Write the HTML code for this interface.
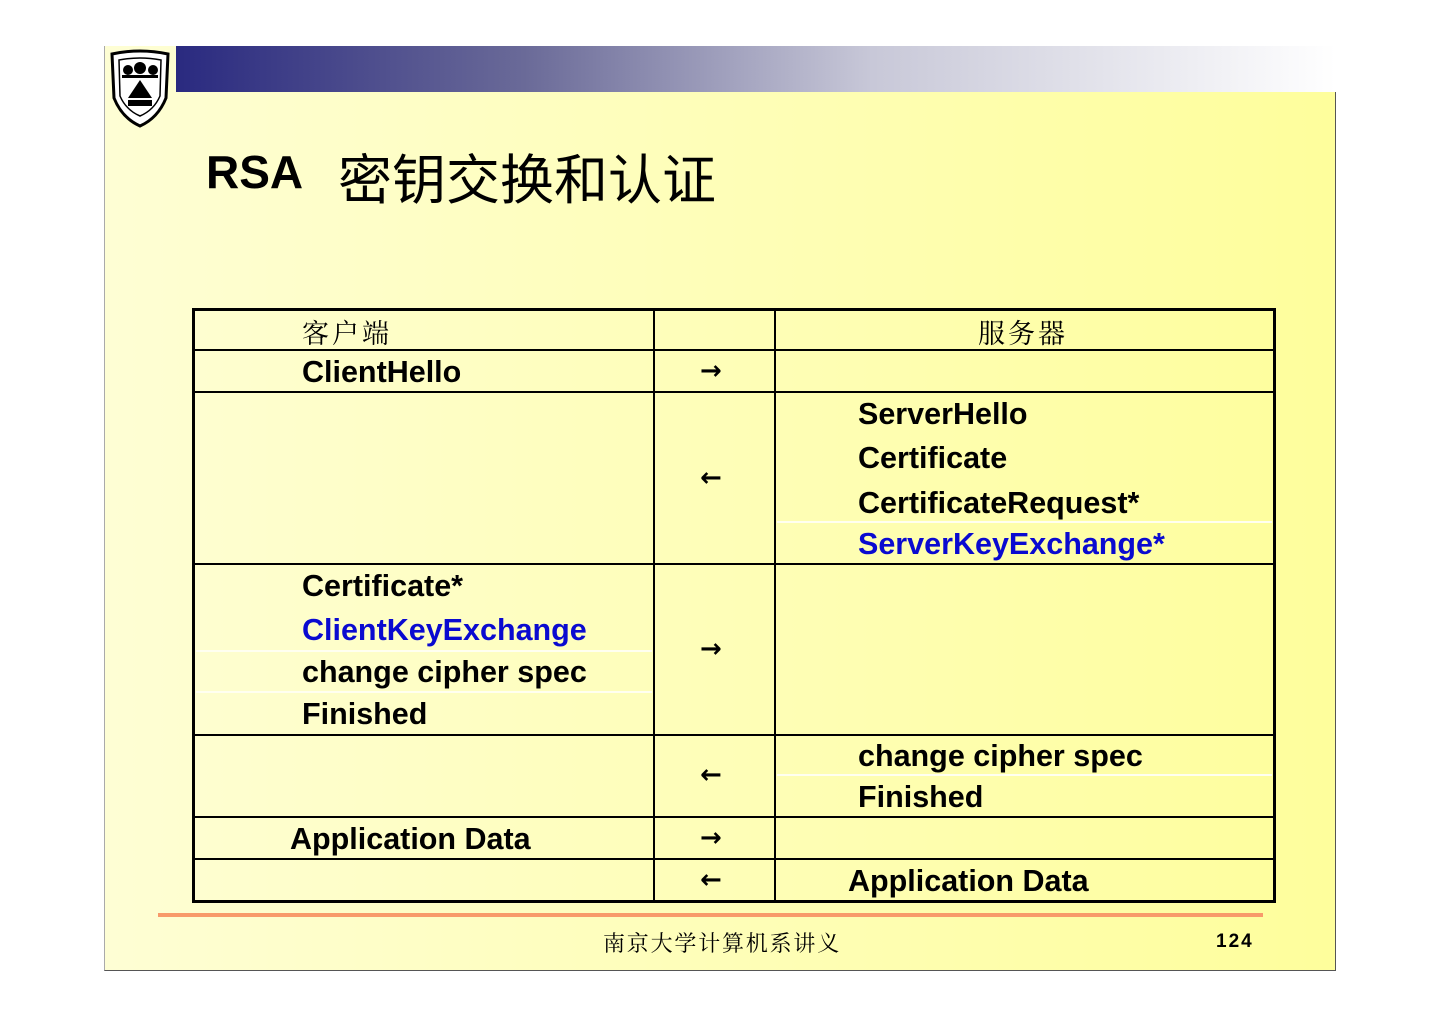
<!DOCTYPE html>
<html><head><meta charset="utf-8"><style>
*{margin:0;padding:0;box-sizing:border-box}
body{width:1440px;height:1018px;background:#fff;position:relative;overflow:hidden;font-family:"Liberation Sans","Noto Sans CJK SC",sans-serif}
.slide{position:absolute;left:104px;top:46px;width:1232px;height:925px;background:linear-gradient(90deg,#fefed4 0%,#fefeb8 50%,#fefe9c 100%);border:1px solid #555;border-top:none;border-left:1px solid #aaa}
.bar{position:absolute;left:176px;top:46px;width:1160px;height:46px;background:linear-gradient(90deg,#2a2a80 0%,#6a6a98 30%,#c8c8d8 60%,#fff 100%)}
.a{position:absolute;white-space:nowrap}
.b{font-weight:bold;font-size:30.5px;color:#000}
.blue{color:#0a0ad0}
.h{position:absolute;background:#000;height:2px}
.v{position:absolute;background:#000;width:2px}
.w{position:absolute;background:#fffff0;height:2px}
.ar{position:absolute;font-size:26px;font-weight:bold;left:700px;font-family:"DejaVu Sans",sans-serif}
.serif{font-family:"Liberation Serif","Noto Serif CJK SC",serif}
</style></head><body>
<div class="slide"></div>
<div class="bar"></div>
<svg class="a" style="left:108px;top:48px" width="64" height="80" viewBox="0 0 64 80">
<path d="M4 6 Q32 0 60 6 L58 50 Q50 70 32 78 Q14 70 6 50 Z" fill="#fff" stroke="#000" stroke-width="3"/>
<path d="M11 12 Q32 8 53 12 L52 48 Q46 62 32 68 Q18 62 12 48 Z" fill="#fff" stroke="#000" stroke-width="1.5"/>
<circle cx="32" cy="20" r="6" fill="#000"/><circle cx="20" cy="22" r="5" fill="#000"/><circle cx="45" cy="22" r="5" fill="#000"/>
<rect x="14" y="27" width="36" height="3" fill="#000"/>
<path d="M32 32 L44 50 L20 50 Z" fill="#000"/><rect x="20" y="52" width="24" height="6" fill="#000"/>
</svg>
<div class="a" style="left:206px;top:145px;font-size:46px;font-weight:bold">RSA</div>
<div class="a" style="left:338px;top:136px;font-size:54px;">密钥交换和认证</div>

<div class="a" style="left:192px;top:308px;width:1084px;height:595px;border:3px solid #000"></div>
<div class="v" style="left:653px;top:308px;height:594px"></div>
<div class="v" style="left:774px;top:308px;height:594px"></div>
<div class="h" style="left:192px;top:349px;width:1083px"></div>
<div class="h" style="left:192px;top:391px;width:1083px"></div>
<div class="h" style="left:192px;top:563px;width:1083px"></div>
<div class="h" style="left:192px;top:734px;width:1083px"></div>
<div class="h" style="left:192px;top:816px;width:1083px"></div>
<div class="h" style="left:192px;top:858px;width:1083px"></div>
<div class="w" style="left:777px;top:521px;width:495px"></div>
<div class="w" style="left:196px;top:650px;width:456px"></div>
<div class="w" style="left:196px;top:691px;width:456px"></div>
<div class="w" style="left:777px;top:774px;width:495px"></div>

<div class="a serif" style="left:302px;top:312px;font-size:27px;letter-spacing:3px">客户端</div>
<div class="a serif" style="left:978px;top:312px;font-size:27px;letter-spacing:3px">服务器</div>
<div class="a b" style="left:302px;top:355px">ClientHello</div>
<div class="ar" style="top:356px">→</div>
<div class="a b" style="left:858px;top:397px">ServerHello</div>
<div class="a b" style="left:858px;top:441px">Certificate</div>
<div class="a b" style="left:858px;top:486px">CertificateRequest*</div>
<div class="a b blue" style="left:858px;top:527px">ServerKeyExchange*</div>
<div class="ar" style="top:463px">←</div>
<div class="a b" style="left:302px;top:569px">Certificate*</div>
<div class="a b blue" style="left:302px;top:613px">ClientKeyExchange</div>
<div class="a b" style="left:302px;top:655px">change cipher spec</div>
<div class="a b" style="left:302px;top:697px">Finished</div>
<div class="ar" style="top:634px">→</div>
<div class="a b" style="left:858px;top:739px">change cipher spec</div>
<div class="a b" style="left:858px;top:780px">Finished</div>
<div class="ar" style="top:760px">←</div>
<div class="a b" style="left:290px;top:822px">Application Data</div>
<div class="ar" style="top:823px">→</div>
<div class="ar" style="top:865px">←</div>
<div class="a b" style="left:848px;top:864px">Application Data</div>

<div class="a" style="left:158px;top:913px;width:1105px;height:4px;background:#f89a6a"></div>
<div class="a serif" style="left:603px;top:927px;font-size:22px;letter-spacing:1.8px">南京大学计算机系讲义</div>
<div class="a" style="left:1216px;top:931px;font-size:19px;font-weight:bold;letter-spacing:2px">124</div>
</body></html>
